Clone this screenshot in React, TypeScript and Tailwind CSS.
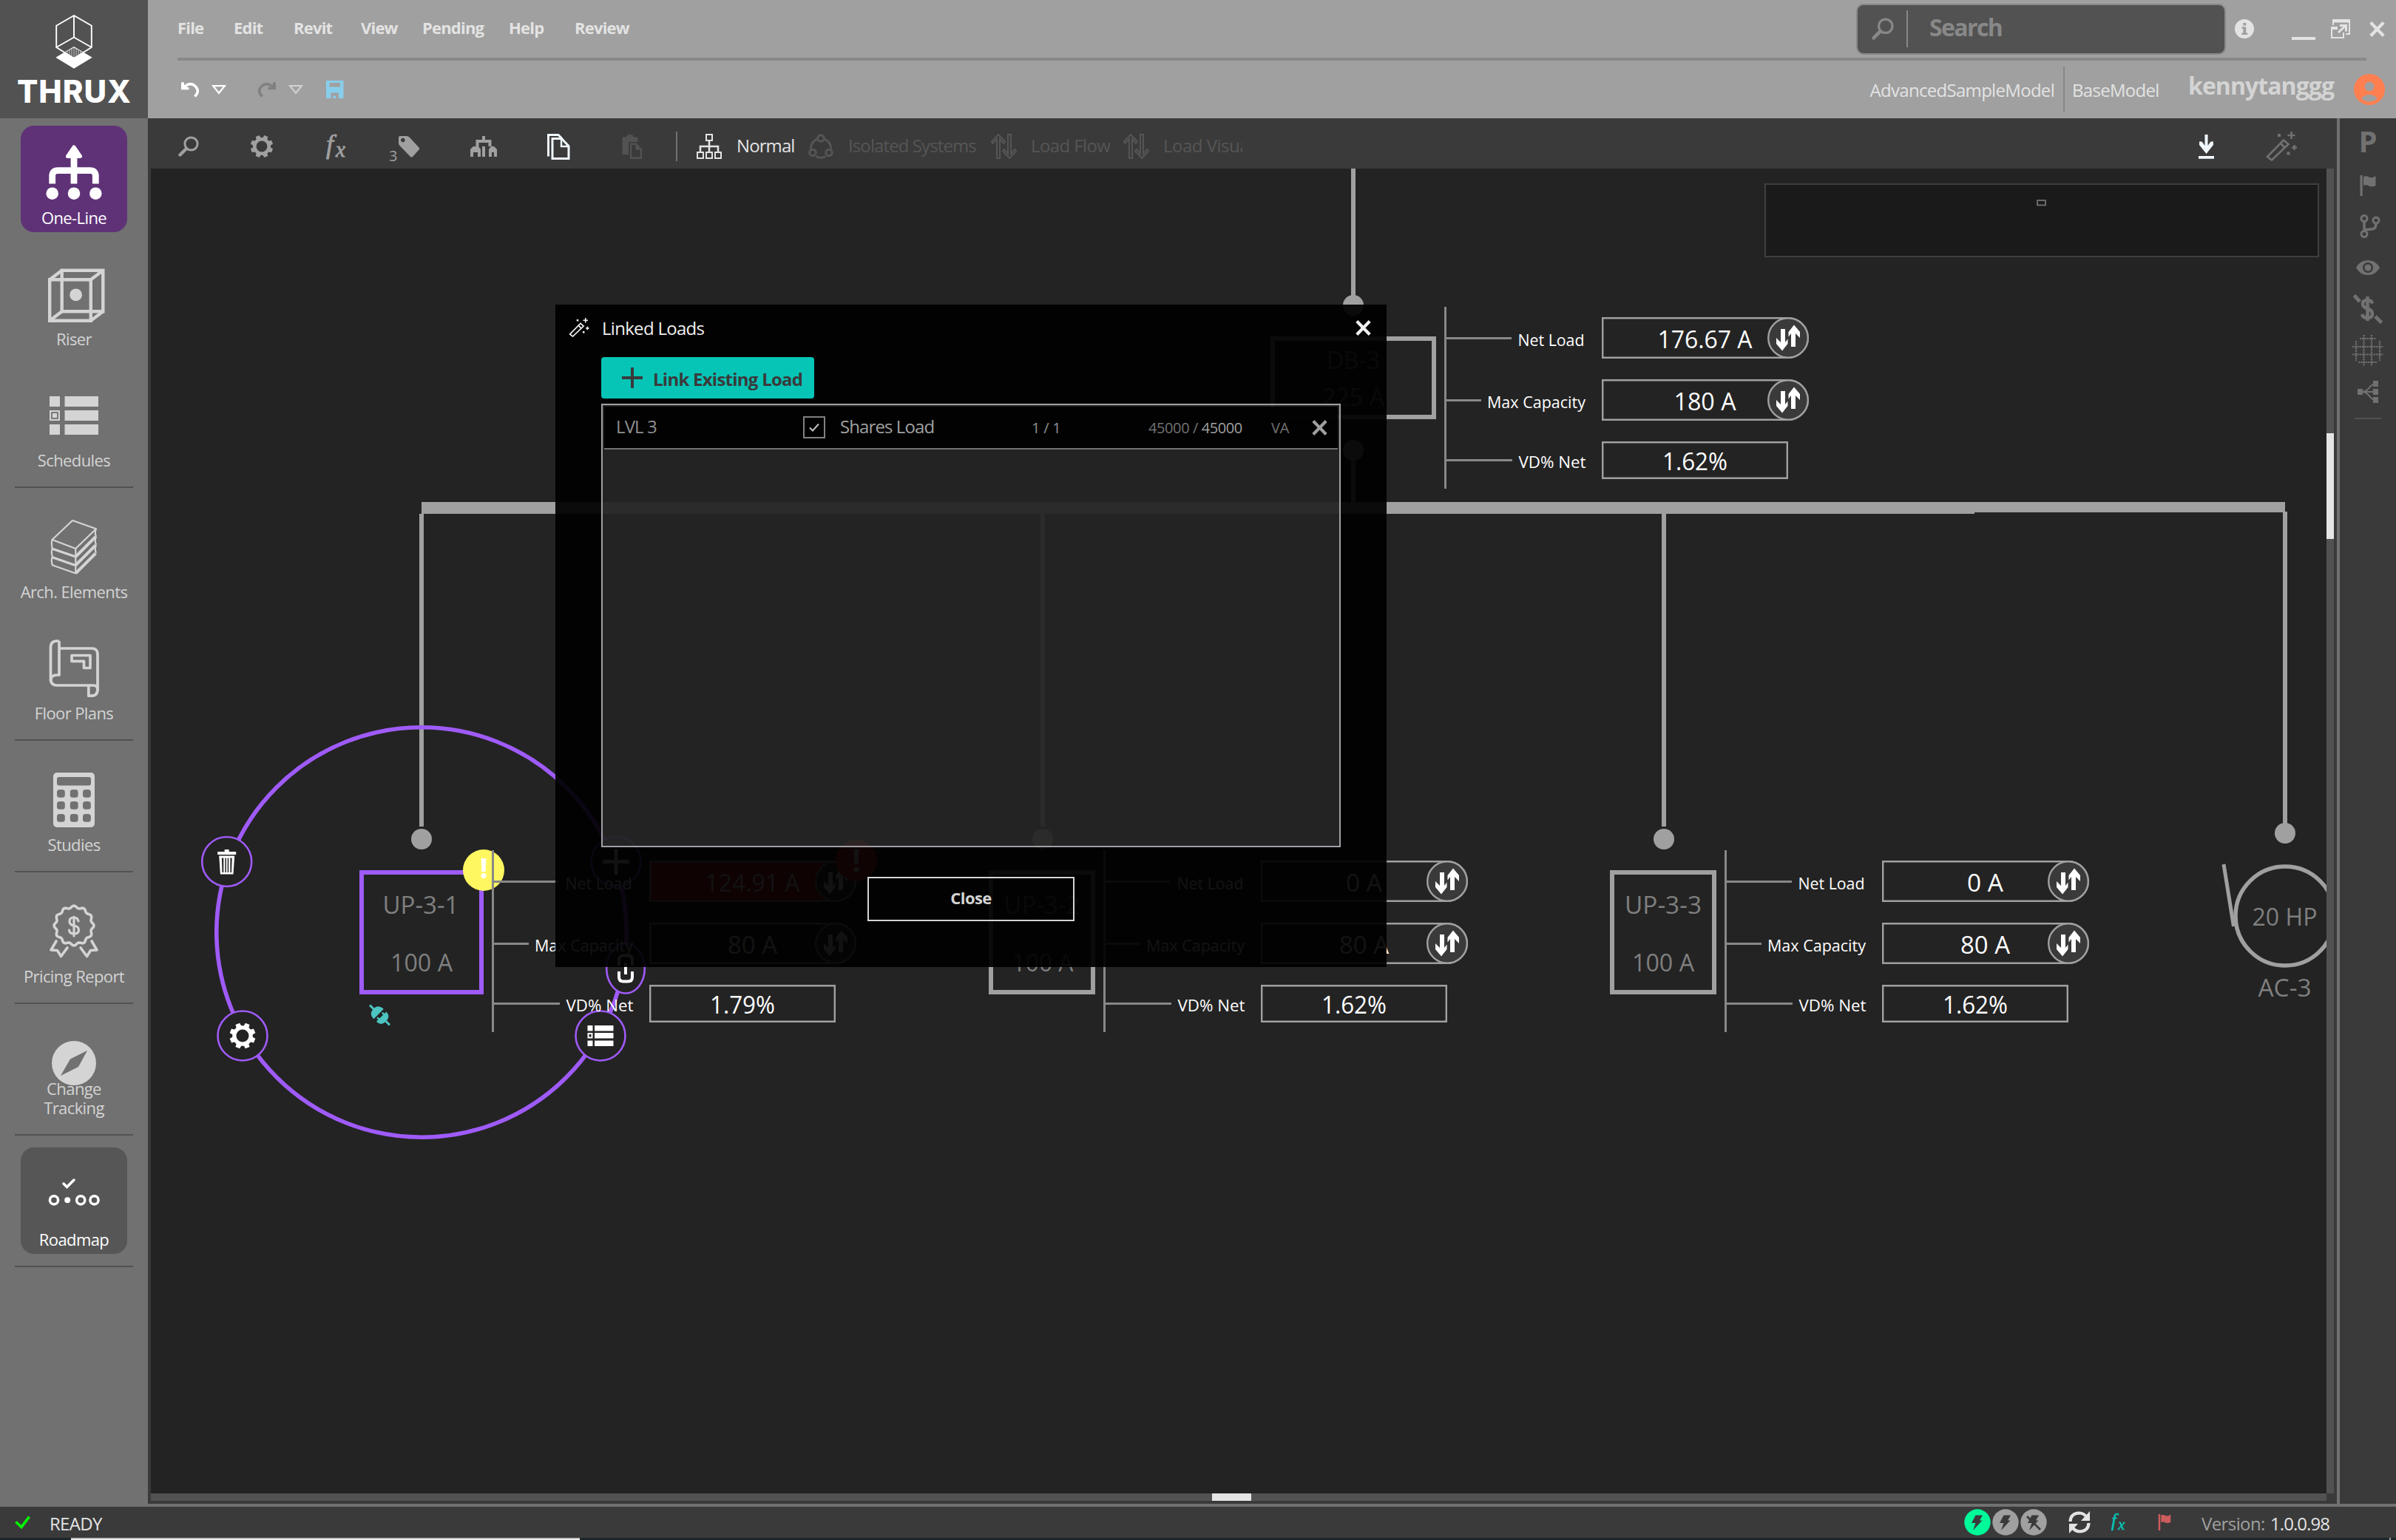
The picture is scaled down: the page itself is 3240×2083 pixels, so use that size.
import type { ReactNode } from 'react';

const UI_FONT = "font-['Open_Sans','Noto_Sans',sans-serif]";

/* ---------- small shared icons ---------- */

function CloseIcon({ className }: { className: string }) {
  return (
    <svg viewBox="0 0 21 21" className={className} fill="none" stroke="currentColor" strokeWidth="4.2">
      <path d="M1.8 1.5 19.2 19.5M19.2 1.5 1.8 19.5" />
    </svg>
  );
}

function SearchIcon({ className }: { className: string }) {
  return (
    <svg viewBox="0 0 28 28" className={className} fill="none" stroke="currentColor">
      <circle cx="17.5" cy="10.5" r="8.6" strokeWidth="3" />
      <path d="M11 17 2.5 25.5" strokeWidth="4.4" strokeLinecap="round" />
    </svg>
  );
}

function GearShape({ cx, cy, scale = 1 }: { cx: number; cy: number; scale?: number }) {
  return (
    <g transform={`translate(${cx} ${cy}) scale(${scale})`}>
      <circle r="9.7" fill="none" stroke="currentColor" strokeWidth="4.6" />
      {[22.5, 67.5, 112.5, 157.5, 202.5, 247.5, 292.5, 337.5].map((angle) => (
        <path key={angle} d="M-2.7 -15.2h5.4l.6 5h-6.6z" fill="currentColor" transform={`rotate(${angle})`} />
      ))}
    </g>
  );
}

function FxIcon({ className }: { className: string }) {
  return (
    <svg viewBox="0 0 30 34" overflow="visible" className={className} fill="currentColor">
      <text x="3" y="26" fontSize="36" fontStyle="italic" fontFamily="Liberation Serif, serif" stroke="currentColor" strokeWidth="0.8">f</text>
      <text x="16" y="31" fontSize="29" fontStyle="italic" fontFamily="Liberation Serif, serif" stroke="currentColor" strokeWidth="0.8">x</text>
    </svg>
  );
}

function WandIcon({ className }: { className: string }) {
  return (
    <svg viewBox="0 0 42 40" className={className} fill="none" stroke="currentColor" strokeWidth="2.6">
      <path d="M2 34 24 11.500l6.500 5.500L8 38.500z" />
      <path d="M20 16l6 6" />
      <path d="M34.500 0v10M29.500 5h10M38.500 18v7M35 21.500h7" />
      <path d="M16 5h4M28.500 29.500h4" strokeWidth="4" />
    </svg>
  );
}

function FlagIcon({ className }: { className: string }) {
  return (
    <svg viewBox="0 0 22 28" className={className} fill="currentColor">
      <path d="M0.500 0h3.200v28H.5z" />
      <path d="M5 2q4-1.500 7.500.5T21.500 1v13q-4.500 2.500-9 .5T5 14z" />
    </svg>
  );
}

function DropTriangle({ className }: { className: string }) {
  return (
    <svg viewBox="0 0 20 13" className={className} fill="none" stroke="currentColor" strokeWidth="2.200">
      <path d="M2.200 1.200h15.600L10 11z" />
    </svg>
  );
}

function UndoIcon({ className }: { className: string }) {
  return (
    <svg viewBox="0 0 24 22" className={className}>
      <path d="M4 8Q12 0 19 6.500T18.500 20.500" fill="none" stroke="currentColor" strokeWidth="3.600" />
      <path d="M0 1.500v9.800h10.500V8.300L5 7.500 3.500 1z" fill="currentColor" />
    </svg>
  );
}

/* ---------- sidebar ---------- */

const scallop = Array.from({ length: 120 }, (_, i) => {
  const a = (i / 120) * Math.PI * 2;
  const r = 25.4 + 1.5 * Math.cos(12 * a);
  return `${(100 + r * Math.sin(a)).toFixed(2)},${(1252 - r * Math.cos(a)).toFixed(2)}`;
}).join(' ');

interface NavItem {
  label: string;
  viewBox: string;
  box?: string;
  text?: string;
  wrap?: boolean;
  dividerAfter?: boolean;
  icon: ReactNode;
}

const navItems: NavItem[] = [
  {
    label: 'One-Line',
    viewBox: '28 170 144 144',
    box: 'bg-[#5f3278]',
    text: 'text-white',
    icon: (
      <g>
        <path d="M100 199l8.500 12.500h-17z" fill="currentColor" stroke="currentColor" strokeWidth="5" strokeLinejoin="round" />
        <path d="M100 210v38.500M70.700 248.500V238q0-7.300 7.300-7.300h44q7.300 0 7.300 7.300v10.500" fill="none" stroke="currentColor" strokeWidth="8.800" />
        <circle cx="70.700" cy="261.700" r="8.300" fill="currentColor" />
        <circle cx="100" cy="261.700" r="8.300" fill="currentColor" />
        <circle cx="129.300" cy="261.700" r="8.300" fill="currentColor" />
      </g>
    ),
  },
  {
    label: 'Riser',
    viewBox: '28 334 144 144',
    icon: (
      <g fill="none" stroke="currentColor" strokeWidth="4.400">
        <path d="M67.200 378.200h55.600v55.600H67.200zM83.700 365.700h55.600v55.600H83.700z" />
        <path d="M67.200 378.200l16.500-12.500M122.800 378.200l16.500-12.500M67.200 433.800l16.500-12.500M122.800 433.800l16.500-12.500" />
        <circle cx="102.600" cy="398.800" r="8.400" fill="currentColor" stroke="none" />
      </g>
    ),
  },
  {
    label: 'Schedules',
    viewBox: '28 498 144 144',
    dividerAfter: true,
    icon: (
      <g fill="currentColor">
        <path d="M67 536h14v14H67zM87.500 536H133v14H87.500zM67 555h14v14H67zM87.500 555H133v14H87.500zM67 574h14v14H67zM87.500 574H133v14H87.500z" />
        <rect x="70" y="558" width="8" height="8" fill="none" stroke="#717171" strokeWidth="1.800" />
      </g>
    ),
  },
  {
    label: 'Arch. Elements',
    viewBox: '28 676 144 144',
    icon: (
      <g fill="none" stroke="currentColor" strokeWidth="2.200" strokeLinejoin="round">
        <path d="M98 704l32 11.200L102.300 742 70.500 730z" />
        <path d="M70.500 730q-1.500 6 .5 12.300M70.500 742q-1.500 6 .5 11.500M70.500 753.500q-1.500 6 .5 11l31.300 11M102.300 742v34M130 715q-2.500 5.500 0 10.700M130 725.700q-2.500 5.500 0 11M130 737q-2.500 5.500 0 11" />
        <path d="M70.700 742.300l31.600 10.800M70.700 753.800l31.600 11" strokeWidth="3.200" />
        <path d="M102.300 753l27-27M102.300 764.500l27-27M102.300 775.500l27-27" strokeWidth="4" />
      </g>
    ),
  },
  {
    label: 'Floor Plans',
    viewBox: '28 840 144 144',
    dividerAfter: true,
    icon: (
      <g fill="none" stroke="currentColor" strokeWidth="3.700" strokeLinejoin="round">
        <path d="M80 867h-3q-8.500 0-8.500 9v42.500q0 8.500 8.500 8.500H126q6 0 6 6" />
        <path d="M80 867V913h-3q-8.500 0-8.500 8" />
        <path d="M80 877h44q8 0 8 8v47.500q0 8.700-9 8.700h-3.200V928" />
        <path d="M97 886.500h25v17h-8.500v-9.200H97z" />
      </g>
    ),
  },
  {
    label: 'Studies',
    viewBox: '28 1018 144 144',
    dividerAfter: true,
    icon: (
      <g fill="currentColor">
        <rect x="72" y="1045" width="56" height="74" rx="5" />
        <g fill="#717171">
          <rect x="77" y="1051" width="46" height="11.500" rx="3" />
          {[1068, 1084, 1101].map((y) =>
            [77, 94.800, 112].map((x) => <rect key={`${x}-${y}`} x={x} y={y} width="10.800" height="10.800" rx="3.500" />)
          )}
        </g>
      </g>
    ),
  },
  {
    label: 'Pricing Report',
    viewBox: '28 1196 144 144',
    dividerAfter: true,
    icon: (
      <g fill="none" stroke="currentColor" strokeWidth="3.600" strokeLinejoin="round" strokeLinecap="round">
        <polygon points={scallop} />
        <path d="M76 1273l-7 12 8.500 .5 5 8 8.500-11.500M124 1273l7 12-8.500 .5-5 8-8.500-11.500" />
        <path d="M106 1246q-1-5-6-5-6 0-6 5t6 6q6.500 1 6.500 6t-6.500 5q-6 0-6.500-5M100 1240v26" strokeWidth="3.200" />
      </g>
    ),
  },
  {
    label: 'Change Tracking',
    viewBox: '28 1374 144 144',
    wrap: true,
    dividerAfter: true,
    icon: (
      <g>
        <circle cx="100" cy="1438" r="30" fill="currentColor" />
        <path d="M118 1421l-23 11.500L82 1455l24-12z" fill="#717171" />
      </g>
    ),
  },
  {
    label: 'Roadmap',
    viewBox: '28 1552 144 144',
    box: 'bg-[#565656]',
    text: 'text-white',
    dividerAfter: true,
    icon: (
      <g fill="none" stroke="currentColor" strokeWidth="3.500" strokeLinecap="round">
        <path d="M86 1601l4.500 4.500L100 1596" />
        <circle cx="73" cy="1623.300" r="5.600" />
        <circle cx="109.200" cy="1623.300" r="5.600" />
        <circle cx="127.500" cy="1623.300" r="5.600" />
        <circle cx="91.200" cy="1623.300" r="4" fill="currentColor" stroke="none" />
      </g>
    ),
  },
];

function Logo() {
  return (
    <div className="flex h-40 w-[200px] shrink-0 flex-col items-center bg-[#525252] pt-5 text-white">
      <svg viewBox="75 20 50 74" className="h-[74px] w-[50px] shrink-0">
        <path d="M75.300 77.700 100 63l24.700 14.700L100 92.700z" fill="currentColor" />
        <path d="M100 64.500 87 71.500 100 78.700l13-7.200z" fill="#525252" />
        <path d="M91 68.500v6M94 67v8.500M97 65.500v12M100 64v14M103 65.500v12M106 67v8.500M109 68.500v6" stroke="#d0d0d0" strokeWidth="1" />
        <path d="M100 21 76.200 34.800V64L100 78.700 123.800 64V34.800zM100 21v29.700M76.200 64 100 50.500 123.800 64" fill="none" stroke="currentColor" strokeWidth="1.900" />
      </svg>
      <div className="mt-[9px] pl-px font-['Inter',sans-serif] text-[42px] font-extrabold leading-[42px] tracking-[1px]">THRUX</div>
    </div>
  );
}

function Sidebar() {
  return (
    <aside className="flex w-[200px] shrink-0 flex-col bg-[#717171]">
      {navItems.map((item) => (
        <div key={item.label} className="flex flex-col items-center">
          <div className={`my-2.5 grid h-36 w-36 grid-cols-1 rounded-[18px] ${item.box ?? ''} ${item.text ?? 'text-[#d4d4d4]'}`}>
            <svg viewBox={item.viewBox} className="col-start-1 row-start-1 h-36 w-36">
              {item.icon}
            </svg>
            <div className={`col-start-1 row-start-1 self-end justify-self-center pb-[7px] text-center text-[22px] leading-[26px] tracking-[-0.6px] ${item.wrap ? 'w-24' : 'whitespace-nowrap'}`}>
              {item.label}
            </div>
          </div>
          {item.dividerAfter && <div className="my-1.5 h-0.5 w-40 bg-[#525252]" />}
        </div>
      ))}
    </aside>
  );
}

/* ---------- header ---------- */

const menu = [
  { label: 'File', width: 'w-[76px]' },
  { label: 'Edit', width: 'w-[81px]' },
  { label: 'Revit', width: 'w-[91px]' },
  { label: 'View', width: 'w-[83px]' },
  { label: 'Pending', width: 'w-[117px]' },
  { label: 'Help', width: 'w-[89px]' },
  { label: 'Review', width: 'w-[80px]' },
];

function Header() {
  return (
    <header className="flex h-40 min-w-0 flex-1 flex-col bg-[#a0a0a0] pl-10">
      <div className="flex h-[78px] items-center">
        <nav className="flex flex-1 pb-1 text-[22px] font-bold leading-[30px] tracking-[-0.8px] text-[#e3e3e3]">
          {menu.map((m) => (
            <span key={m.label} className={m.width}>{m.label}</span>
          ))}
        </nav>
        <div className="flex h-[69px] w-[500px] items-center rounded-[10px] border-2 border-[#888888] bg-[#525252] pl-[19px] text-[#888888]">
          <SearchIcon className="h-[30px] w-[30px]" />
          <div className="ml-[17px] h-[50px] w-0.5 bg-[#888888]" />
          <span className="ml-[29px] pb-1 text-[32px] font-bold leading-[44px] tracking-[-1.6px]">Search</span>
        </div>
        <div className="flex w-[230px] items-center pl-3 text-[#e3e3e3]">
          <svg viewBox="0 0 26 26" className="h-[26px] w-[26px]">
            <circle cx="13" cy="13" r="13" fill="currentColor" />
            <path d="M11.300 5h4v3.400h-4zM9.500 10.200h5.800v8.300h2V21H9.300v-2.500h2v-5.800H9.500z" fill="#a0a0a0" />
          </svg>
          <div className="ml-[51px] mt-[26px] h-1 w-8 bg-[#e3e3e3]" />
          <svg viewBox="0 0 26 26" className="ml-[21px] h-[26px] w-[26px]" fill="none" stroke="currentColor" strokeWidth="2">
            <path d="M3 8V1h22v19h-5" />
            <path d="M3 3h22" strokeWidth="3" />
            <path d="M9 11H1v14h16v-7" />
            <path d="M1 12.500h8" strokeWidth="3" />
            <path d="M10 18l9-8.500M12 8.500h8.500v8" strokeWidth="3" />
          </svg>
          <CloseIcon className="ml-[26px] h-[21px] w-[21px]" />
        </div>
      </div>
      <div className="h-1 w-[2960px] bg-[#888888]" />
      <div className="flex h-[78px] items-center">
        <UndoIcon className="ml-[5px] h-[22px] w-6 text-white" />
        <DropTriangle className="ml-[17px] h-[13px] w-5 text-white" />
        <UndoIcon className="ml-[43px] h-[22px] w-6 -scale-x-100 text-[#808080]" />
        <DropTriangle className="ml-[17px] h-[13px] w-5 text-[#cfcfcf]" />
        <svg viewBox="0 0 24 24" className="ml-[31px] h-6 w-6 text-[#87ceeb]">
          <path fillRule="evenodd" fill="currentColor" d="M0 0h23.500v24H17v-7.500H6.500V24H0zM4.500 3v5.500h14.500V3zM9.500 20.500h3.500V24H9.500z" />
        </svg>
        <div className="flex flex-1 items-center justify-end text-2xl leading-[32px] tracking-[-0.7px] text-[#e3e3e3]">
          <span className="pt-0.5">AdvancedSampleModel</span>
          <div className="ml-3 mr-[10px] h-[62px] w-0.5 bg-[#888888]" />
          <span className="w-[116px] pt-0.5">BaseModel</span>
          <span className="ml-[41px] w-[198px] pb-2.5 text-[32px] font-bold leading-[44px] tracking-[-0.95px] text-[#d4d4d4]">kennytanggg</span>
          <svg viewBox="0 0 42 42" className="ml-[26px] mr-[15px] h-[42px] w-[42px] shrink-0">
            <circle cx="21" cy="21" r="21" fill="#ff7f50" />
            <circle cx="21" cy="17" r="6.300" fill="#a0a0a0" />
            <path d="M10.500 33q4-5 10.500-5t10.500 5q-4 4.500-10.500 4.500T10.500 33z" fill="#a0a0a0" />
          </svg>
        </div>
      </div>
    </header>
  );
}

/* ---------- toolbar ---------- */

function FlowArrows() {
  return (
    <svg viewBox="0 0 35 34" className="h-[34px] w-[35px] shrink-0" fill="none" stroke="currentColor" strokeWidth="2">
      <path d="M8 33V7l-5.500 6L.8 10.500 10 1l9 9.500-2 2.500L12 7v26z" />
      <path d="M23 1v26l-5-6-2 2.500L25 33l9.200-9.500-2-2.500L27 27V1z" />
    </svg>
  );
}

function Toolbar() {
  return (
    <div className="flex h-[68px] items-center bg-[#3a3a3a] pl-[41px] pt-2 text-[#a0a0a0]">
      <SearchIcon className="h-7 w-7" />
      <svg viewBox="0 0 32 32" className="ml-[69px] h-8 w-8">
        <GearShape cx={16} cy={16} />
      </svg>
      <FxIcon className="ml-[68px] h-[34px] w-[30px]" />
      <div className="ml-[58px] flex h-[34px] w-[42px]">
        <span className="w-3 pt-[17px] text-[20px] leading-[26px]">3</span>
        <svg viewBox="0 0 30 30" className="mt-0.5 h-[30px] w-[30px] shrink-0" fill="currentColor">
          <path fillRule="evenodd" d="M3 1h9q2 0 3.500 1.500l13 14q1.500 1.500 0 3L20 29q-1.500 1.200-3 0L2 13.500Q1 12 1 10V3q0-2 2-2zM6.800 3.800a2.800 2.800 0 1 0 .1 0z" />
        </svg>
      </div>
      <svg viewBox="0 0 36 28" className="ml-[68px] h-7 w-9" fill="currentColor">
        <path d="M16 0h4v5h8.500v9H32l4 4v10h-4v-6h-3v6h-4V18l3-4h-3.500V9h-13v5H11l3 4v10h-4v-6H4v6H0V18l4-4h3.500V5H16zM16 14h4v14h-4z" />
      </svg>
      <svg viewBox="0 0 31 35" className="ml-[68px] h-[35px] w-[31px] text-[#f0f8ff]" fill="none" stroke="currentColor" strokeWidth="3">
        <path d="M7 6.500h12.500l9.500 10v17H7z" />
        <path d="M19 6v11h10" strokeWidth="2.400" />
        <path d="M1.500 30.500v-29H15l5 5" />
      </svg>
      <svg viewBox="0 0 28 34" className="ml-[69px] h-[34px] w-7 text-[#525252]" fill="currentColor">
        <path d="M1.500 4.500H7L9 1h6l2 3.500h5.500V11H12q-2 0-2 2v15H1.500z" />
        <path fillRule="evenodd" d="M12 12.500h8.500l7.500 8V34H12zM14.200 15v16.500h11.500v-10h-6.200V15z" />
      </svg>
      <div className="ml-[46px] h-10 w-0.5 bg-[#717171]" />

      <div className="ml-[26px] flex text-2xl leading-[34px] tracking-[-0.9px] text-[#555555]">
        <div className="flex w-[151px] gap-5 text-[#e3e3e3]">
          <svg viewBox="0 0 34 34" className="h-[34px] w-[34px] shrink-0" fill="none" stroke="currentColor" strokeWidth="2">
            <path d="M13 1h8v8h-8zM1 25h8v8H1zM13 25h8v8h-8zM25 25h8v8h-8z" />
            <path d="M17 9v16M5 25v-8h24v8" strokeWidth="2.600" />
          </svg>
          <span className="-mt-px">Normal</span>
        </div>
        <div className="flex w-[247px] gap-5">
          <svg viewBox="0 0 34 34" className="h-[34px] w-[34px] shrink-0" fill="none" stroke="currentColor" strokeWidth="3">
            <circle cx="17" cy="6" r="4.300" />
            <circle cx="6" cy="25.500" r="4.300" />
            <circle cx="28" cy="25.500" r="4.300" />
            <path d="M12.500 7Q3 11 3.300 21M21.500 7Q31 11 30.700 21M10.500 30.500Q17 34 23.500 30.500" />
          </svg>
          <span className="-mt-px whitespace-nowrap">Isolated Systems</span>
        </div>
        <div className="flex w-[179px] gap-[19px]">
          <FlowArrows />
          <span className="-mt-px whitespace-nowrap tracking-[-0.6px]">Load Flow</span>
        </div>
        <div className="flex w-[161px] gap-[19px] overflow-hidden">
          <FlowArrows />
          <span className="-mt-px whitespace-nowrap tracking-[-0.5px]">Load Visual</span>
        </div>
      </div>

      <svg viewBox="0 0 21 33" className="ml-auto mr-[70px] h-[33px] w-[21px] text-[#f0f8ff]" fill="currentColor">
        <path d="M8.500 0h4v15l4-5.500H20v4.500L10.500 26 1 14V9.500h3.500l4 5.500zM0 29h21v3.700H0z" />
      </svg>
      <WandIcon className="mr-[54px] h-10 w-[42px] text-[#717171]" />
    </div>
  );
}

/* ---------- one-line diagram ---------- */

const WIRE = '#a0a0a0';
const PURPLE = '#9f5bf8';

interface TextProps {
  x: number;
  y: number;
  width: number;
  size?: number;
  fill?: string;
  children: string;
}

// Centred on x and fitted to a fixed width
function Label({ x, y, width, size = 32, fill = '#7f7f7f', children }: TextProps) {
  return (
    <text x={x - width / 2} y={y} fontSize={size} fill={fill} textLength={width} lengthAdjust="spacingAndGlyphs">
      {children}
    </text>
  );
}

function FlipButton({ cx, cy }: { cx: number; cy: number }) {
  return (
    <g transform={`translate(${cx} ${cy})`}>
      <circle r="26.800" fill="#3a3a3a" stroke={WIRE} strokeWidth="2.400" />
      <path d="M-10 -12h6v18l3.500-4.500v6.500l-7.500 9.500-8-9.500v-8l6 6z" fill="#fff" />
      <path d="M10 12h-6v-18l-3.500 4.500v-6.500l7.500-9.500 8 9.500v8l-6-6z" fill="#fff" />
    </g>
  );
}

interface ReadoutProps {
  x: number;
  y: number;
  load: [string, number];
  capacity: [string, number];
  drop: string;
  alert?: boolean;
}

function Readout({ x, y, load, capacity, drop, alert }: ReadoutProps) {
  return (
    <g transform={`translate(${x} ${y})`}>
      <rect width="3" height="246" fill="#888888" />
      <path d="M3 42.500h88M3 126.500h47M3 207.500h89" stroke="#888888" strokeWidth="3" />
      <Label x={144.500} y={53} width={90} size={22.500} fill="#fff">Net Load</Label>
      <Label x={124.500} y={137} width={133} size={22.500} fill="#fff">Max Capacity</Label>
      <Label x={146} y={218} width={91} size={22.500} fill="#fff">VD% Net</Label>

      <path d="M214.200 15.200H465a26.800 26.800 0 0 1 0 53.600H214.200z" fill={alert ? '#c81e1e' : 'none'} stroke={WIRE} strokeWidth="2.400" />
      <path d="M214.200 99.200H465a26.800 26.800 0 0 1 0 53.600H214.200z" fill="none" stroke={WIRE} strokeWidth="2.400" />
      <path d="M214.200 183.200H463.800v48.600H214.200z" fill="none" stroke={WIRE} strokeWidth="2.400" />
      <Label x={352.500} y={56} width={load[1]} fill="#fff">{load[0]}</Label>
      <Label x={352.500} y={140} width={capacity[1]} fill="#fff">{capacity[0]}</Label>
      <Label x={339} y={221} width={88} fill="#fff">{drop}</Label>
      <FlipButton cx={465} cy={42} />
      <FlipButton cx={465} cy={126} />
      {alert && (
        <g>
          <circle cx="493" cy="14" r="28" fill="#e03030" />
          <path d="M489.500 -1h7l-1 20h-5z" fill="#fff" />
          <circle cx="493" cy="26" r="3.500" fill="#fff" />
        </g>
      )}
    </g>
  );
}

function RingButton({ cx, cy, rx = 33.5, ry = 33.5, children }: { cx: number; cy: number; rx?: number; ry?: number; children: ReactNode }) {
  return (
    <g transform={`translate(${cx} ${cy})`}>
      <ellipse rx={rx} ry={ry} fill="#232323" stroke={PURPLE} strokeWidth="2.600" />
      <g color="#fff">{children}</g>
    </g>
  );
}

function Diagram() {
  return (
    <svg viewBox="204 228 2942 1792" className="h-[1792px] w-[2942px] shrink-0 bg-[#232323]">
      {/* feeder and bus */}
      <path d="M1830 228v180M1830 609v72M570 695v423M1410 695v423M2250 695v423M3090 692v423" stroke={WIRE} strokeWidth="6" />
      <path d="M570 679H3090v14H2670v2H570z" fill={WIRE} />
      <circle cx="1830" cy="413" r="14" fill={WIRE} />
      <circle cx="1830" cy="609" r="14" fill={WIRE} />
      <circle cx="570" cy="1135" r="14" fill={WIRE} />
      <circle cx="1410" cy="1135" r="14" fill={WIRE} />
      <circle cx="2250" cy="1135" r="14" fill={WIRE} />
      <circle cx="3090" cy="1127" r="14" fill={WIRE} />

      {/* panels */}
      <rect x="1721" y="458" width="218" height="106" fill="none" stroke={WIRE} strokeWidth="6" />
      <Label x={1830} y={499} width={72}>DB-3</Label>
      <Label x={1830} y={549} width={84}>225 A</Label>

      <rect x="1340" y="1180" width="138" height="162" fill="none" stroke={WIRE} strokeWidth="6" />
      <Label x={1409} y={1236} width={103}>UP-3-2</Label>
      <Label x={1410} y={1314} width={83}>100 A</Label>

      <rect x="2180" y="1180" width="138" height="162" fill="none" stroke={WIRE} strokeWidth="6" />
      <Label x={2249} y={1236} width={104}>UP-3-3</Label>
      <Label x={2249} y={1314} width={84}>100 A</Label>

      {/* selected panel */}
      <circle cx="570" cy="1261" r="277.200" fill="none" stroke={PURPLE} strokeWidth="5.600" />
      <rect x="489" y="1180" width="162" height="162" fill="none" stroke={PURPLE} strokeWidth="6" />
      <Label x={569} y={1236} width={103}>UP-3-1</Label>
      <Label x={570} y={1314} width={84}>100 A</Label>
      <circle cx="654" cy="1177" r="28" fill="#fff761" />
      <path d="M650.600 1161h6.800l-.8 18h-5.200z" fill="#fff" />
      <circle cx="654" cy="1184.500" r="3.500" fill="#fff" />

      <RingButton cx={306.7} cy={1165.5}>
        <path d="M-3 -16.500h6v3h9.500v4h-25v-4H-3z" fill="currentColor" />
        <path fillRule="evenodd" d="M-10.500 -8h21L8.800 17H-8.800zM-6.800 -5l.6 19.500h1.800V-5zM-2.300 -5v19.500h1.500V-5zM1 -5v19.500h1.500V-5zM4.700 -5v19.500h1.600L7 -5z" fill="currentColor" />
      </RingButton>
      <RingButton cx={328} cy={1401}>
        <GearShape cx={0} cy={0} scale={1.15} />
      </RingButton>
      <RingButton cx={833} cy={1165.5}>
        <path d="M0 -17.500v35M-17.500 0h35" stroke="currentColor" strokeWidth="5" />
      </RingButton>
      <RingButton cx={846} cy={1310} rx={25.8}>
        <path d="M-9 -4v-7.500q0-6 6-6h6q6 0 6 6V-4M-9 4v7.500q0 6 6 6h6q6 0 6-6V4M0 -8v16" fill="none" stroke="currentColor" strokeWidth="4" />
      </RingButton>
      <RingButton cx={812} cy={1401}>
        <path d="M-17.500 -14h7v7.500h-7zM-8 -14H17.500v7.500H-8zM-17.500 -4h7v7.500h-7zM-8 -4H17.500v7.500H-8zM-17.500 6.500h7V14h-7zM-8 6.500H17.500V14H-8z" fill="currentColor" />
        <path d="M-15.500 -2h3v3.500h-3z" fill="#232323" />
      </RingButton>

      {/* plug marker */}
      <g transform="translate(513.500 1373) rotate(45)" fill="#4cc4c0">
        <path d="M-19 -1.500h8v3h-8zM11 -1.500h8v3h-8z" />
        <path d="M-2 -9.500q-10 0-10 9.500t10 9.500z" />
        <path d="M3 -9.500q9 0 9 9.500T3 9.500V6H0V3.500h3v-7H0V-6h3z" />
      </g>

      {/* motor */}
      <circle cx="3090" cy="1239" r="67" fill="none" stroke={WIRE} strokeWidth="5.500" />
      <path d="M3007 1169 3020.500 1253" stroke={WIRE} strokeWidth="5" />
      <Label x={3089.5} y={1252} width={88}>20 HP</Label>
      <Label x={3089.5} y={1348} width={72}>AC-3</Label>

      <Readout x={1953} y={415} load={['176.67 A', 128]} capacity={['180 A', 84]} drop="1.62%" />
      <Readout x={665} y={1150} load={['124.91 A', 128]} capacity={['80 A', 67]} drop="1.79%" alert />
      <Readout x={1492} y={1150} load={['0 A', 49]} capacity={['80 A', 67]} drop="1.62%" />
      <Readout x={2332} y={1150} load={['0 A', 49]} capacity={['80 A', 67]} drop="1.62%" />

      {/* minimap */}
      <rect x="2387" y="249" width="748" height="98" fill="#1a1a1a" stroke="#3f3f3f" strokeWidth="2" />
      <rect x="2755" y="271" width="11" height="6.500" fill="none" stroke="#717171" strokeWidth="1.800" />
    </svg>
  );
}

function LinkedLoadsDialog() {
  return (
    <section className="absolute left-[551px] top-[252px] flex h-[896px] w-[1124px] flex-col bg-black/93">
      <div className="flex h-[71px] items-center pb-3 pl-[18px] pr-[21px] pt-[3px] text-[#f0f0f0]">
        <WandIcon className="h-[26px] w-7" />
        <h2 className="ml-[17px] flex-1 pt-px text-2xl leading-[32px] tracking-[-0.7px]">Linked Loads</h2>
        <CloseIcon className="h-[21px] w-[21px]" />
      </div>

      <div className="flex flex-col px-[62px]">
        <button className="flex h-14 w-72 items-center rounded bg-[#06c5b7] pl-7 text-[#3a3a3a]">
          <svg viewBox="0 0 28 28" className="h-7 w-7" stroke="currentColor" strokeWidth="4">
            <path d="M14 0v28M0 14h28" />
          </svg>
          <span className="ml-3.5 whitespace-nowrap pt-1 text-2xl font-bold leading-[32px] tracking-[-0.75px]">Link Existing Load</span>
        </button>

        <div className="mt-[7px] h-[600px] border-2 border-[#a0a0a6] bg-white/13 p-0.5">
          <div className="flex h-[58px] items-center border-b-2 border-[#717171] bg-black/92 pl-4 text-2xl leading-[32px] tracking-[-0.9px] text-[#8f8f8f]">
            <span className="w-[253px] pb-0.5">LVL 3</span>
            <div className="flex h-[30px] w-[30px] items-center justify-center border-2 border-[#808080] text-[#c0c0c0]">
              <svg viewBox="0 0 14 12" className="h-3 w-3.5" fill="none" stroke="currentColor" strokeWidth="2">
                <path d="M1 6.500 5 10.500 13 1.500" />
              </svg>
            </div>
            <span className="ml-5 w-[259px] pb-0.5 text-[#a0a0a0]">Shares Load</span>
            <span className="w-[158px] pt-0.5 text-[20px] tracking-[-0.2px] text-[#8f8f8f]">1 / 1</span>
            <span className="w-[166px] whitespace-nowrap pt-0.5 text-[20px] tracking-[-0.4px] text-[#717171]">
              45000 / <span className="text-[#a0a0a0]">45000</span>
            </span>
            <span className="w-[55px] pt-0.5 text-[20px] tracking-[-0.2px] text-[#717171]">VA</span>
            <CloseIcon className="h-[21px] w-[21px] text-[#a0a0a0]" />
          </div>
        </div>

        <button className="mt-10 flex h-[60px] w-[280px] items-center justify-center self-center border-2 border-[#d4d4d4] pb-1 text-[22px] font-bold leading-[30px] tracking-[-0.6px] text-[#d4d4d4]">
          Close
        </button>
      </div>
    </section>
  );
}

/* ---------- right rail ---------- */

function RightRail() {
  return (
    <aside className="flex w-20 flex-col items-center border-l-4 border-[#717171] bg-[#3a3a3a] pt-1.5 text-[#717171]">
      <div className="flex h-14 items-center pb-1.5 text-[40px] font-bold leading-[50px]">P</div>
      <div className="flex h-14 items-center pt-0.5">
        <FlagIcon className="h-7 w-[22px]" />
      </div>
      <div className="flex h-14 items-center pl-1.5">
        <svg viewBox="0 0 28 32" className="h-8 w-7" fill="none" stroke="currentColor" strokeWidth="3">
          <circle cx="6" cy="5.500" r="4" />
          <circle cx="6" cy="26.500" r="4" />
          <circle cx="22" cy="8" r="4" />
          <path d="M6 9.500v13M22 12q0 7-4.500 7.800L6 21" strokeWidth="3.600" />
        </svg>
      </div>
      <div className="flex h-14 items-center">
        <svg viewBox="0 0 32 20" className="h-5 w-8" fill="currentColor">
          <path fillRule="evenodd" d="M16 0q10.500 0 16 10-5.500 10-16 10T0 10Q5.500 0 16 0zM16 3a7 7 0 1 0 .1 0z" />
          <path d="M16 5.500a4.500 4.500 0 1 0 .1 0z" />
        </svg>
      </div>
      <div className="flex h-14 items-center">
        <svg viewBox="0 0 40 40" className="h-10 w-10" fill="none" stroke="currentColor">
          <path d="M1.500 1.500 9 10M30 30l8.500 8.500" strokeWidth="5" />
          <path d="M26 12.500q-1-4.500-6.500-4.500-6.500 0-6.500 5 0 4.500 6.500 6.500t6.500 7q0 5.500-6.500 5.500-6 0-7.500-5M19.500 3v33" strokeWidth="4.600" />
        </svg>
      </div>
      <div className="flex h-14 items-center">
        <svg viewBox="0 0 42 42" className="h-[42px] w-[42px]" fill="none" stroke="currentColor" strokeWidth="2.200" strokeDasharray="2.200 1">
          <path d="M15.500 0v42M26 0v42M0 16h42M0 26.500h42" />
          <path d="M10 5h22v0M5 8v27M37 8v27M8 37h26" />
        </svg>
      </div>
      <div className="flex h-14 items-center">
        <svg viewBox="0 0 28 30" className="h-[30px] w-7" fill="currentColor">
          <path d="M0 11h7v8H0zM21 0h7v8h-7zM21 11h7v8h-7zM21 22h7v8h-7z" />
          <path d="M6 15h16M7 15q6-1 10-7l5-4M7 15q6 1 10 7l5 4" fill="none" stroke="currentColor" strokeWidth="2" />
        </svg>
      </div>
      <div className="mt-[7px] h-0.5 w-9 bg-[#525252]" />
    </aside>
  );
}

/* ---------- status bar ---------- */

function Bolt({ color, off }: { color: string; off?: boolean }) {
  return (
    <svg viewBox="0 0 36 36" className={`h-9 w-9 ${color}`}>
      <circle cx="18" cy="18" r="17.700" fill="currentColor" />
      <path d="M15.500 8.500h9.500l-4 7h3.500L12 29l3.500-10H10z" fill="#3a3a3a" />
      {off && <path d="M9 10l18 18" stroke="#3a3a3a" strokeWidth="2.600" />}
    </svg>
  );
}

function StatusBar() {
  return (
    <footer className="flex h-[42px] items-center bg-[#3a3a3a] text-2xl leading-[32px] tracking-[-0.5px] text-[#e3e3e3]">
      <svg viewBox="0 0 21 18" className="ml-5 h-[18px] w-[21px]" fill="none" stroke="#00ff00" strokeWidth="3.600">
        <path d="M1.500 8.500 9 15.500 19.500 1.500" />
      </svg>
      <span className="ml-[26px] pt-1 tracking-[-0.7px]">READY</span>
      <div className="ml-auto flex gap-0.5">
        <Bolt color="text-[#00fa9a]" />
        <Bolt color="text-[#a0a0a0]" />
        <Bolt color="text-[#a0a0a0]" off />
      </div>
      <svg viewBox="0 0 30 32" className="ml-[29px] h-8 w-[30px]" fill="none" stroke="currentColor" strokeWidth="4.200">
        <path d="M2.500 15Q3 4 14.500 3.500q6.500 0 10.500 6M27.500 17Q27 28 15.500 28.500 9 28.500 5 22.500" />
        <path d="M29 1v13H17zM1 31V18h12z" fill="currentColor" stroke="none" />
      </svg>
      <FxIcon className="ml-[26px] h-6 w-[21px] text-[#06c5b7]" />
      <FlagIcon className="ml-11 h-[22px] w-[18px] text-[#cd5c5c]" />
      <span className="ml-[41px] w-[93px] pt-[3px] tracking-[-0.6px] text-[#a0a0a0]">Version:</span>
      <span className="mr-[89px] w-[81px] pt-[3px] tracking-[-0.95px]">1.0.0.98</span>
    </footer>
  );
}

export default function App() {
  return (
    <div className={`flex h-[2083px] w-[3240px] flex-col overflow-hidden bg-[#1d262b] ${UI_FONT}`}>
      <div className="flex">
        <Logo />
        <Header />
      </div>

      <div className="flex h-[1874px]">
        <Sidebar />
        <main className="relative flex w-[2960px] flex-col bg-[#3a3a3a]">
          <Toolbar />
          <div className="flex pl-1">
            <Diagram />
            <div className="w-2.5 bg-[#525252] pt-[358px]">
              <div className="h-[143px] bg-[#e5e5e5]" />
            </div>
          </div>
          <div className="ml-1 h-2.5 w-[2942px] bg-[#525252] pl-[1435px]">
            <div className="h-2.5 w-[53px] bg-[#e5e5e5]" />
          </div>
          <LinkedLoadsDialog />
        </main>
        <RightRail />
      </div>

      <div className="h-1 shrink-0 bg-[#717171]" />
      <StatusBar />
      <div className="flex h-[3px] pl-24">
        <div className="w-[688px] border-t-2 border-[#c0c0c0] bg-white" />
        <div className="ml-auto mr-[7px] w-0.5 bg-[#a0a0a0]" />
      </div>
    </div>
  );
}
